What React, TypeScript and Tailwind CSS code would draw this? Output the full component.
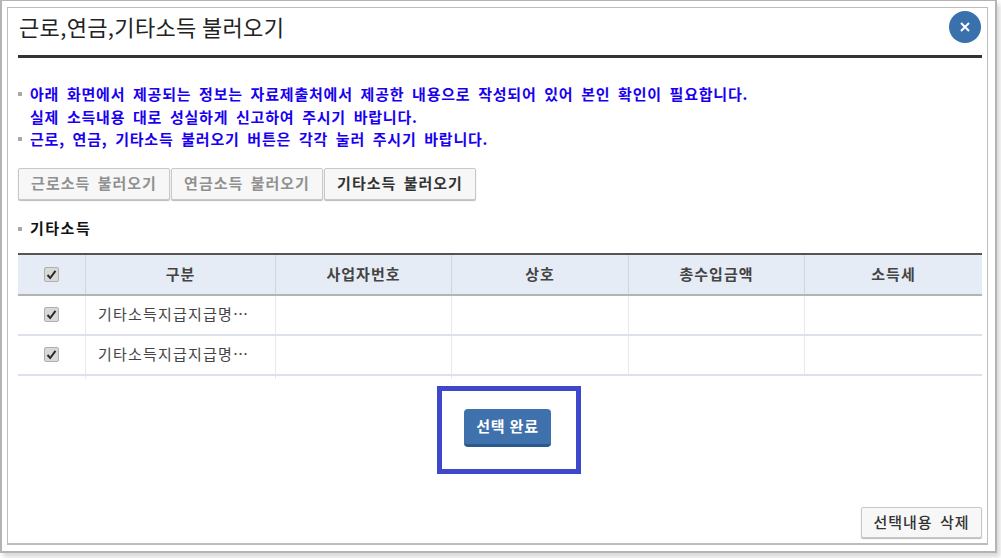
const font = { fontFamily: '"Noto Sans CJK KR", "Noto Sans", sans-serif' };

function Check() {
  return (
    <div className="mx-auto flex h-[15px] w-[15px] items-center justify-center rounded-[2px] border border-[#b0b0b0] bg-[#d9d9d9]">
      <svg width="11" height="11" viewBox="0 0 11 11">
        <path d="M1.5 6 L4.2 9 L9.5 1.8" fill="none" stroke="#2b2b2b" strokeWidth="2" />
      </svg>
    </div>
  );
}

function Bullet() {
  return <span className="mr-[8px] inline-block h-[4px] w-[4px] shrink-0 bg-[#a8a8a8]" />;
}

const headers = ["구분", "사업자번호", "상호", "총수입금액", "소득세"];
const widths = ["w-[190px]", "w-[176px]", "w-[177px]", "w-[176px]", "w-[177px]"];

function Row() {
  return (
    <div className="flex h-[40px] border-b-2 border-[#dde2ea]">
      <div className="flex w-[68px] items-center border-r border-[#e6e9ee] pr-[1px]"><Check /></div>
      <div className="flex w-[190px] items-center border-r border-[#e6e9ee] pl-[12px] text-[15px] tracking-[1.2px] text-[#444]">기타소득지급지급명…</div>
      <div className="w-[176px] border-r border-[#e6e9ee]" />
      <div className="w-[177px] border-r border-[#e6e9ee]" />
      <div className="w-[176px] border-r border-[#e6e9ee]" />
      <div className="w-[177px]" />
    </div>
  );
}

function SmallButton({ label, active }: { label: string; active?: boolean }) {
  return (
    <button className={`h-[32px] w-[152px] rounded-[2px] border border-[#c8c8c8] bg-[#f7f7f7] text-[15px] font-bold tracking-[1px] [word-spacing:3px] shadow-[0_1px_1px_#bbb] ${active ? "text-[#333]" : "text-[#909090]"}`}>
      {label}
    </button>
  );
}

export default function App() {
  return (
    <div className="h-[558px] w-[1001px] overflow-hidden bg-white" style={font}>
      <div className="h-[553px] w-[997px] border-2 border-t-[1px] border-[#b4b4b4] bg-white pl-[5px] pr-[7px] pt-[6px] pb-[6px] shadow-[3px_4px_5px_#d8d8d8]">
        <div className="flex h-[538px] w-[981px] flex-col border border-b-2 border-[#bdbdbd] pl-[10px] pr-[5px]">
          <div className="flex h-[47px] items-center justify-between">
            <h1 className="mt-[-11px] pl-[1px] text-[22px] leading-none tracking-[0.35px] text-[#222]">근로,연금,기타소득 불러오기</h1>
            <button className="mr-[1px] mt-[-9px] flex h-[32px] w-[32px] items-center justify-center rounded-full bg-[#3a70ab]">
              <svg width="12" height="12" viewBox="0 0 12 12">
                <path d="M2 2 L10 10 M10 2 L2 10" stroke="#fff" strokeWidth="2" />
              </svg>
            </button>
          </div>
          <div className="h-[3px] w-[964px] bg-[#333]" />

          <div className="mt-[25px] text-[15px] font-bold leading-[22.5px] tracking-[0.8px] [word-spacing:3.5px] text-[#1a00f0]">
            <div className="flex items-center"><Bullet />아래 화면에서 제공되는 정보는 자료제출처에서 제공한 내용으로 작성되어 있어 본인 확인이 필요합니다.</div>
            <div className="pl-[12px]">실제 소득내용 대로 성실하게 신고하여 주시기 바랍니다.</div>
            <div className="flex items-center"><Bullet />근로, 연금, 기타소득 불러오기 버튼은 각각 눌러 주시기 바랍니다.</div>
          </div>

          <div className="mt-[17px] flex gap-[1px]">
            <SmallButton label="근로소득 불러오기" />
            <SmallButton label="연금소득 불러오기" />
            <SmallButton label="기타소득 불러오기" active />
          </div>

          <div className="mt-[19px] flex h-[20px] items-center text-[15px] font-bold tracking-[1.5px] text-[#111]"><Bullet />기타소득</div>

          <div className="mt-[14px] w-[964px] border-t-2 border-[#555]">
            <div className="flex h-[41px] border-b-2 border-[#b4b4b4] bg-[#e6ecf5]">
              <div className="flex w-[68px] items-center border-r border-[#cfd6e0] pr-[1px]"><Check /></div>
              {headers.map((h, i) => (
                <div key={h} className={`flex ${widths[i]} items-center justify-center ${i < 4 ? "border-r border-[#cfd6e0]" : ""} text-[15px] font-bold tracking-[1px] text-[#444]`}>{h}</div>
              ))}
            </div>
            <Row />
            <Row />
            <div className="flex h-[3px]">
              <div className="w-[68px] border-r border-[#e6e9ee]" />
              <div className="w-[190px] border-r border-[#e6e9ee]" />
              <div className="w-[176px] border-r border-[#e6e9ee]" />
            </div>
          </div>

          <div className="ml-[419px] mt-[7px] flex">
            <div className="flex h-[88px] w-[144px] items-center justify-center border-[5px] border-[#3f48cc] pb-[3px] pr-[3px]">
              <button className="h-[38px] w-[87px] rounded-[4px] border-b-[3px] border-[#2b5a8e] bg-[#3f72ad] text-[15px] font-bold tracking-[0.8px] text-white">선택 완료</button>
            </div>
          </div>

          <div className="mt-[33px] flex justify-end">
            <button className="h-[31px] w-[121px] rounded-[2px] border border-[#c8c8c8] bg-[#f7f7f7] text-[15px] font-medium tracking-[1px] [word-spacing:3px] text-[#333] shadow-[0_1px_1px_#bbb]">선택내용 삭제</button>
          </div>
        </div>
      </div>
    </div>
  );
}
